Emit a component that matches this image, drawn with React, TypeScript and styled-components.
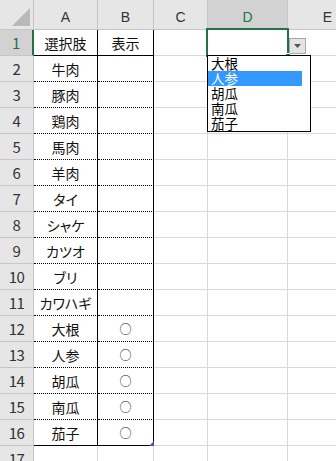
import React from "react";
import styled, { createGlobalStyle, css } from "styled-components";

const GlobalStyle = createGlobalStyle`
  html, body {
    margin: 0;
    padding: 0;
    background: #ffffff;
  }
  body {
    font-family: "Noto Sans CJK JP", "Noto Sans", sans-serif;
  }
`;

const GREEN = "#217346";
const GRID = "#d9d9d9";
const HEAD_LINE = "#c6c6c6";

const columns = ["A", "B", "C", "D", "E"];

const rows: [string, string][] = [
  ["選択肢", "表示"],
  ["牛肉", ""],
  ["豚肉", ""],
  ["鶏肉", ""],
  ["馬肉", ""],
  ["羊肉", ""],
  ["タイ", ""],
  ["シャケ", ""],
  ["カツオ", ""],
  ["ブリ", ""],
  ["カワハギ", ""],
  ["大根", "○"],
  ["人参", "○"],
  ["胡瓜", "○"],
  ["南瓜", "○"],
  ["茄子", "○"],
];

const listItems = ["大根", "人参", "胡瓜", "南瓜", "茄子"];

const Sheet = styled.div`
  width: 336px;
  height: 461px;
  overflow: hidden;
  display: grid;
  grid-template-columns: 34px 64px 56px 54px 80px 80px;
  grid-template-rows: 30px repeat(17, 26px);
`;

const Corner = styled.div`
  position: relative;
  background: #e6e6e6;
  border-right: 1px solid ${HEAD_LINE};
  border-bottom: 1px solid ${HEAD_LINE};
  box-sizing: border-box;
  display: flex;
  align-items: flex-end;
  justify-content: flex-end;
  padding: 0 3px 3px 0;

  &::after {
    content: "";
    width: 18px;
    height: 18px;
    background: #b9b9b9;
    clip-path: polygon(100% 0, 100% 100%, 0 100%);
  }
`;

const ColHeader = styled.div<{ $selected?: boolean }>`
  box-sizing: border-box;
  background: ${(p) => (p.$selected ? "#d2d2d2" : "#e6e6e6")};
  color: ${(p) => (p.$selected ? GREEN : "#333333")};
  border-right: 1px solid ${HEAD_LINE};
  border-bottom: ${(p) =>
    p.$selected ? `2px solid ${GREEN}` : `1px solid ${HEAD_LINE}`};
  display: flex;
  justify-content: center;
  align-items: center;
  padding-top: 5px;
  font-family: "Liberation Sans", "Noto Sans", sans-serif;
  font-size: 14px;
`;

const RowHeader = styled.div<{ $selected?: boolean }>`
  box-sizing: border-box;
  background: ${(p) => (p.$selected ? "#d2d2d2" : "#e6e6e6")};
  color: ${(p) => (p.$selected ? GREEN : "#333333")};
  border-right: ${(p) =>
    p.$selected ? `2px solid ${GREEN}` : `1px solid ${HEAD_LINE}`};
  border-bottom: 1px solid ${HEAD_LINE};
  display: flex;
  justify-content: center;
  align-items: center;
  font-size: 15px;
  letter-spacing: -0.5px;
`;

const Cell = styled.div<{
  $bottom?: "solid" | "dotted";
  $right?: boolean;
  $anchor?: boolean;
}>`
  box-sizing: border-box;
  border-right: 1px solid ${GRID};
  border-bottom: 1px solid ${GRID};
  display: flex;
  justify-content: center;
  align-items: center;
  font-size: 14px;
  font-feature-settings: "palt";
  color: #111111;
  white-space: nowrap;
  ${(p) => p.$right && css`border-right-color: #000000;`}
  ${(p) =>
    p.$bottom &&
    css`
      border-bottom: 1px ${p.$bottom} #000000;
    `}
  ${(p) => p.$anchor && css`position: relative;`}
`;

const Mark = styled.span`
  font-size: 12px;
  line-height: 12px;
  color: #222222;
`;

const Selection = styled.div`
  position: absolute;
  left: -2px;
  top: -2px;
  width: 83px;
  height: 29px;
  box-sizing: border-box;
  border: 2px solid ${GREEN};
  z-index: 3;
`;

const FillHandle = styled.div`
  position: absolute;
  left: 77px;
  top: 23px;
  width: 5px;
  height: 5px;
  box-sizing: border-box;
  background: ${GREEN};
  border-top: 1px solid #ffffff;
  border-left: 1px solid #ffffff;
  z-index: 4;
`;

const DropButton = styled.div`
  position: absolute;
  left: 81px;
  top: 8px;
  width: 17px;
  height: 16px;
  box-sizing: border-box;
  background: #e4e4e4;
  border: 1px solid #a8a8a8;
  display: flex;
  align-items: center;
  justify-content: center;
  z-index: 3;

  &::after {
    content: "";
    width: 7px;
    height: 4px;
    background: #555555;
    clip-path: polygon(0 0, 100% 0, 50% 100%);
  }
`;

const ListBox = styled.div`
  position: absolute;
  left: -1px;
  top: 25px;
  width: 104px;
  box-sizing: border-box;
  background: #ffffff;
  border: 1px solid #000000;
  padding-right: 8px;
  z-index: 5;
  display: flex;
  flex-direction: column;
`;

const ListItem = styled.div<{ $active?: boolean }>`
  height: 15px;
  line-height: 15px;
  padding-left: 3px;
  font-size: 13.5px;
  text-align: left;
  color: ${(p) => (p.$active ? "#ffffff" : "#000000")};
  background: ${(p) => (p.$active ? "#3399ff" : "transparent")};
`;

const TableHandle = styled.span`
  position: absolute;
  right: -1px;
  bottom: -1px;
  width: 5px;
  height: 5px;
  background: #3e5aa8;
  clip-path: polygon(100% 0, 100% 100%, 0 100%);
`;

function DataValidationCell() {
  return (
    <Cell $anchor>
      <Selection />
      <FillHandle />
      <DropButton />
      <ListBox>
        {listItems.map((item, i) => (
          <ListItem key={item} $active={i === 1}>
            {item}
          </ListItem>
        ))}
      </ListBox>
    </Cell>
  );
}

export default function App() {
  return (
    <>
      <GlobalStyle />
      <Sheet>
        <Corner />
        {columns.map((c) => (
          <ColHeader key={c} $selected={c === "D"}>
            {c}
          </ColHeader>
        ))}

        {rows.map(([a, b], i) => {
          const rowNo = i + 1;
          const bottom = rowNo === 1 || rowNo === 16 ? "solid" : "dotted";
          return (
            <React.Fragment key={rowNo}>
              <RowHeader $selected={rowNo === 1}>{rowNo}</RowHeader>
              <Cell $bottom={bottom} $right>
                {a}
              </Cell>
              <Cell $bottom={bottom} $right $anchor={rowNo === 16}>
                {b === "○" ? <Mark>{b}</Mark> : b}
                {rowNo === 16 && <TableHandle />}
              </Cell>
              <Cell />
              {rowNo === 1 ? <DataValidationCell /> : <Cell />}
              <Cell />
            </React.Fragment>
          );
        })}

        <RowHeader>17</RowHeader>
        <Cell />
        <Cell />
        <Cell />
        <Cell />
        <Cell />
      </Sheet>
    </>
  );
}
